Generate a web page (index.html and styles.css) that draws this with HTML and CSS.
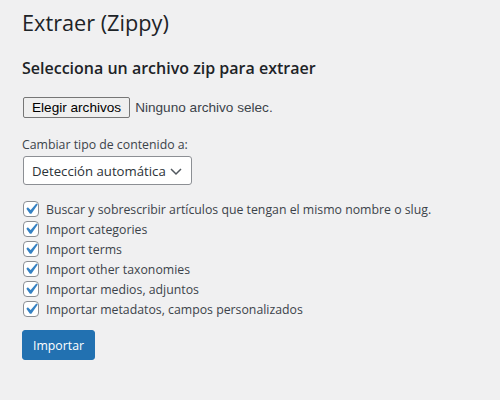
FILE: index.html
```html
<!DOCTYPE html>
<html lang="es">
<head>
<meta charset="utf-8">
<title>Extraer (Zippy)</title>
<link rel="stylesheet" href="styles.css">
</head>
<body>
<div class="wrap">
  <h1 class="title">Extraer (Zippy)</h1>
  <h2 class="subtitle">Selecciona un archivo zip para extraer</h2>
  <div class="file-row">
    <button class="file-btn" type="button">Elegir archivos</button>
    <span class="file-name">Ninguno archivo selec.</span>
  </div>
  <div class="field-label">Cambiar tipo de contenido a:</div>
  <div class="select">
    <span class="select-text">Detección automática</span>
    <svg class="chevron" width="16" height="16" viewBox="0 0 16 16"><path d="M3 6l5 5 5-5" fill="none" stroke="#50575e" stroke-width="1.5"/></svg>
  </div>
  <ul class="checks">
    <li class="check-row"><span class="checkbox"><svg viewBox="0 0 20 20"><path d="M14.83 4.89l1.34.94-5.81 8.38H9.02L5.78 9.67l1.34-1.25 2.57 2.4z" fill="#3582c4"/></svg></span><span>Buscar y sobrescribir artículos que tengan el mismo nombre o slug.</span></li>
    <li class="check-row"><span class="checkbox"><svg viewBox="0 0 20 20"><path d="M14.83 4.89l1.34.94-5.81 8.38H9.02L5.78 9.67l1.34-1.25 2.57 2.4z" fill="#3582c4"/></svg></span><span>Import categories</span></li>
    <li class="check-row"><span class="checkbox"><svg viewBox="0 0 20 20"><path d="M14.83 4.89l1.34.94-5.81 8.38H9.02L5.78 9.67l1.34-1.25 2.57 2.4z" fill="#3582c4"/></svg></span><span>Import terms</span></li>
    <li class="check-row"><span class="checkbox"><svg viewBox="0 0 20 20"><path d="M14.83 4.89l1.34.94-5.81 8.38H9.02L5.78 9.67l1.34-1.25 2.57 2.4z" fill="#3582c4"/></svg></span><span>Import other taxonomies</span></li>
    <li class="check-row"><span class="checkbox"><svg viewBox="0 0 20 20"><path d="M14.83 4.89l1.34.94-5.81 8.38H9.02L5.78 9.67l1.34-1.25 2.57 2.4z" fill="#3582c4"/></svg></span><span>Importar medios, adjuntos</span></li>
    <li class="check-row"><span class="checkbox"><svg viewBox="0 0 20 20"><path d="M14.83 4.89l1.34.94-5.81 8.38H9.02L5.78 9.67l1.34-1.25 2.57 2.4z" fill="#3582c4"/></svg></span><span>Importar metadatos, campos personalizados</span></li>
  </ul>
  <button class="primary" type="button">Importar</button>
</div>
</body>
</html>
```
FILE: styles.css
```css
html, body {
  margin: 0;
  background: #f0f0f1;
}
body {
  font-family: "Open Sans", "Noto Sans", sans-serif;
  font-size: 12.3px;
  color: #3c434a;
}
.wrap {
  padding: 8px 20px 0 22px;
}
.title {
  margin: 0;
  font-size: 21.7px;
  line-height: 30px;
  font-weight: 400;
  color: #1d2327;
}
.subtitle {
  margin: 19px 0 0;
  font-size: 16px;
  line-height: 22px;
  font-weight: 600;
  color: #1d2327;
}
.file-row {
  margin-top: 18px;
  display: flex;
  align-items: center;
  gap: 5px;
  height: 21px;
  padding-left: 1px;
}
.file-btn {
  font-family: "Liberation Sans", Arial, sans-serif;
  font-size: 13.6px;
  color: #000;
  background: #efefef;
  border: 1px solid #767676;
  border-radius: 2px;
  height: 21px;
  padding: 0 8px;
  margin: 0;
}
.file-name {
  font-family: "Liberation Sans", Arial, sans-serif;
  font-size: 13.6px;
  color: #3c434a;
}
.field-label {
  margin-top: 17px;
  line-height: 20px;
}
.select {
  margin-top: 1px;
  margin-left: 1px;
  width: 169px;
  height: 29px;
  box-sizing: border-box;
  border: 1px solid #8c8f94;
  border-radius: 3px;
  background: #fff;
  display: flex;
  align-items: center;
  justify-content: space-between;
  padding: 0 7px 0 8px;
  font-size: 13.2px;
  color: #2c3338;
  white-space: nowrap;
}
.chevron {
  display: block;
  flex: none;
}
.checks {
  list-style: none;
  margin: 14px 0 0;
  padding: 0;
}
.check-row {
  display: flex;
  align-items: center;
  gap: 7px;
  height: 20px;
}
.checkbox {
  width: 16px;
  height: 16px;
  box-sizing: border-box;
  border: 1px solid #8c8f94;
  border-radius: 4px;
  background: #fff;
  margin-left: 1px;
  position: relative;
  flex: none;
}
.checkbox svg {
  position: absolute;
  left: -4px;
  top: -4px;
  width: 22px;
  height: 22px;
}
.primary {
  margin-top: 11px;
  height: 30px;
  padding: 0 10px;
  border: 1px solid #2271b1;
  border-radius: 3px;
  background: #2271b1;
  color: #fff;
  font-family: "Open Sans", "Noto Sans", sans-serif;
  font-size: 12.3px;
  display: block;
}
```
